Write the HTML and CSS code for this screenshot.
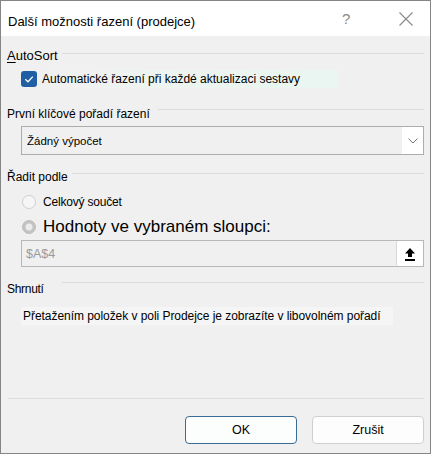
FILE: index.html
```html
<!DOCTYPE html>
<html lang="cs">
<head>
<meta charset="utf-8">
<title>Další možnosti řazení (prodejce)</title>
<link rel="stylesheet" href="styles.css">
</head>
<body>
<div class="window">
  <div class="titlebar">
    <span class="title">Další možnosti řazení (prodejce)</span>
    <span class="help">?</span>
    <span class="close">
      <svg width="16" height="16" viewBox="0 0 16 16"><path d="M1.5 1.5 L14.5 14.5 M14.5 1.5 L1.5 14.5" stroke="#8a8a8a" stroke-width="1.1" fill="none"/></svg>
    </span>
  </div>
  <div class="content">
    <div class="group-head h-autosort"><span class="label"><u>A</u>utoSort</span><span class="rule"></span></div>
    <div class="check-row">
      <span class="checkbox">
        <svg width="16" height="16" viewBox="0 0 16 16"><path d="M4.3 8.2 L7 10.8 L11.8 5.6" stroke="#fff" stroke-width="1.3" fill="none"/></svg>
      </span>
      <span class="check-label">Automatické řazení při každé aktualizaci sestavy</span>
    </div>
    <div class="group-head h-first"><span class="label">První klíčové pořadí řazení</span><span class="rule"></span></div>
    <div class="select">
      <span class="select-value">Žádný výpočet</span>
      <span class="select-btn">
        <svg width="10" height="6" viewBox="0 0 10 6"><path d="M0.5 0.5 L5 5 L9.5 0.5" stroke="#777" stroke-width="1" fill="none"/></svg>
      </span>
    </div>
    <div class="group-head h-sort"><span class="label">Řadit podle</span><span class="rule"></span></div>
    <div class="radio-row small">
      <span class="radio"></span>
      <span class="radio-label">Celkový součet</span>
    </div>
    <div class="radio-row big">
      <span class="radio checked"></span>
      <span class="radio-label">Hodnoty ve vybraném sloupci:</span>
    </div>
    <div class="refbox">
      <span class="ref-value">$A$4</span>
      <span class="ref-btn">
        <svg width="12" height="14" viewBox="0 0 12 14"><path d="M6 1 L11 6.5 L8 6.5 L8 10 L4 10 L4 6.5 L1 6.5 Z" fill="#000"/><rect x="1" y="12" width="10" height="2" fill="#000"/></svg>
      </span>
    </div>
    <div class="group-head h-summary"><span class="label small-label">Shrnutí</span><span class="rule"></span></div>
    <div class="summary"><span class="summary-text">Přetažením položek v poli Prodejce je zobrazíte v libovolném pořadí</span></div>
    <div class="spacer"></div>
    <div class="footer-rule"></div>
    <div class="buttons">
      <button class="btn default">OK</button>
      <button class="btn">Zrušit</button>
    </div>
  </div>
</div>
</body>
</html>
```

FILE: styles.css
```css
html, body {
  margin: 0;
  padding: 0;
  background: #ffffff;
}
body {
  font-family: "Liberation Sans", Arial, sans-serif;
  color: #000;
}
.window {
  width: 431px;
  height: 454px;
  box-sizing: border-box;
  border: 1px solid #858585;
  background: #f0f0f0;
  display: flex;
  flex-direction: column;
}
.titlebar {
  height: 35px;
  flex: none;
  background: #ffffff;
  display: flex;
  align-items: center;
  padding-left: 7px;
}
.title {
  font-size: 13px;
  flex: 1;
  padding-top: 5px;
}
.help {
  font-size: 15px;
  color: #8a8a8a;
  width: 56px;
  margin-top: 0px;
}
.close {
  width: 32px;
  display: flex;
  margin-top: 0px;
}
.content {
  flex: 1;
  display: flex;
  flex-direction: column;
  padding: 0 6px 0 6px;
}
.group-head {
  display: flex;
  align-items: flex-start;
  gap: 4px;
  font-size: 12px;
  height: 16px;
}
.group-head .rule {
  flex: 1;
  height: 1px;
  background: #dadada;
}
.group-head .label u {
  text-decoration: underline;
  text-underline-offset: 2px;
}
.h-autosort { margin-top: 12px; font-size: 13px; }
.h-autosort .rule { margin-top: 5px; }
.h-first { margin-top: 19px; }
.h-first .rule { margin-top: 2px; margin-left: 4px; }
.h-sort { margin-top: 15px; }
.h-sort .rule { margin-top: 3px; }
.h-summary { margin-top: 15px; }
.h-summary .rule { margin-top: 0px; margin-left: 14px; }
.small-label { font-size: 12px; letter-spacing: -0.3px; }

.check-row {
  display: flex;
  align-items: center;
  margin-top: 5px;
  height: 19px;
  padding-left: 14px;
}
.checkbox {
  width: 16px;
  height: 16px;
  border-radius: 3px;
  background: #215fa5;
  display: flex;
  flex: none;
}
.check-label {
  font-size: 12px;
  margin-left: 4px;
  padding: 2px 38px 2px 1px;
  background: linear-gradient(90deg, #f0f0f0 0%, #eef4f0 40%, #e9f6f1 100%);
}
.select {
  margin-top: 3px;
  margin-left: 14px;
  height: 27px;
  border: 1px solid #adadad;
  display: flex;
  align-items: stretch;
  background: #f0f0f0;
}
.select-value {
  flex: 1;
  font-size: 11.5px;
  display: flex;
  align-items: center;
  padding-left: 5px;
}
.select-btn {
  width: 21px;
  background: #ffffff;
  display: flex;
  align-items: center;
  justify-content: center;
}
.radio-row {
  display: flex;
  align-items: center;
  padding-left: 15px;
}
.radio-row.small { margin-top: 5px; height: 22px; }
.radio-row.big { margin-top: 2px; height: 24px; }
.radio {
  width: 14px;
  height: 14px;
  box-sizing: border-box;
  border-radius: 50%;
  border: 1px solid #cfcfcf;
  background: #f6f6f6;
  flex: none;
}
.radio.checked {
  background: radial-gradient(circle, #ececec 0 3px, #c3c3c3 4px);
  border-color: #bdbdbd;
}
.radio-row.small .radio-label {
  font-size: 12px;
  margin-left: 7px;
  letter-spacing: -0.2px;
}
.radio-row.big .radio-label {
  font-size: 17px;
  margin-left: 7px;
}
.refbox {
  margin-top: 1px;
  margin-left: 14px;
  height: 25px;
  border: 1px solid #b8b8b8;
  background: #f0f0f0;
  display: flex;
  align-items: stretch;
}
.ref-value {
  flex: 1;
  color: #9a9a9a;
  font-size: 12.5px;
  display: flex;
  align-items: center;
  padding-left: 4px;
}
.ref-btn {
  width: 26px;
  background: #ffffff;
  border-left: 1px solid #d8d8d8;
  border-radius: 2px;
  display: flex;
  align-items: center;
  justify-content: center;
}
.summary {
  margin-top: 9px;
  margin-left: 14px;
  display: flex;
}
.summary-text {
  font-size: 12px;
  letter-spacing: -0.05px;
  background: #f5f5f5;
  padding: 2px 12px 2px 2px;
}
.spacer { flex: 1; }
.footer-rule {
  height: 1px;
  background: #dedede;
  margin-left: 1px;
}
.buttons {
  display: flex;
  justify-content: flex-end;
  gap: 15px;
  margin-top: 17px;
  margin-bottom: 9px;
}
.btn {
  width: 112px;
  height: 28px;
  box-sizing: border-box;
  font-family: "Liberation Sans", Arial, sans-serif;
  font-size: 12.5px;
  color: #000;
  background: #fdfdfd;
  border: 1px solid #d0d0d0;
  border-radius: 4px;
  padding: 0;
}
.btn.default {
  border-color: #3a6c93;
  background: #fcfdfd;
}
```
